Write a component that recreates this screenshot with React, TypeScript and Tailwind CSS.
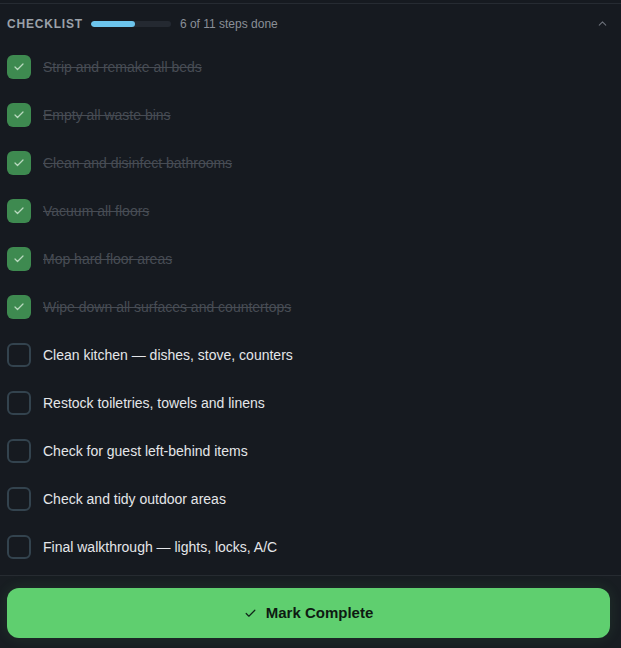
import React from "react";

type Step = { label: string; done: boolean };

const steps: Step[] = [
  { label: "Strip and remake all beds", done: true },
  { label: "Empty all waste bins", done: true },
  { label: "Clean and disinfect bathrooms", done: true },
  { label: "Vacuum all floors", done: true },
  { label: "Mop hard floor areas", done: true },
  { label: "Wipe down all surfaces and countertops", done: true },
  { label: "Clean kitchen — dishes, stove, counters", done: false },
  { label: "Restock toiletries, towels and linens", done: false },
  { label: "Check for guest left-behind items", done: false },
  { label: "Check and tidy outdoor areas", done: false },
  { label: "Final walkthrough — lights, locks, A/C", done: false },
];

function Check({ className, width = 2.5 }: { className?: string; width?: number }) {
  return (
    <svg viewBox="0 0 24 24" fill="none" stroke="currentColor" strokeWidth={width} strokeLinecap="round" strokeLinejoin="round" className={className}>
      <path d="M20 6 9 17l-5-5" />
    </svg>
  );
}

export default function App() {
  const doneCount = steps.filter((s) => s.done).length;
  const pct = (doneCount / steps.length) * 100;
  return (
    <div className="h-[648px] w-[621px] bg-[#161a20] flex flex-col overflow-hidden" style={{ fontFamily: '"Liberation Sans", Arial, sans-serif' }}>
      <div className="h-[3px] shrink-0" />
      <div className="border-t border-[#262b32] flex-1 flex flex-col">
        <div className="h-[39px] flex items-center px-[7px] shrink-0">
          <span className="text-[12px] font-bold tracking-[0.8px] text-[#9ba1a9]">CHECKLIST</span>
          <div className="ml-[8px] w-[80px] h-[6px] rounded-full bg-[#242931] overflow-hidden">
            <div className="h-full rounded-full bg-[#6cc4ec]" style={{ width: `${pct}%` }} />
          </div>
          <span className="ml-[9px] text-[12px] text-[#8a8f97]">6 of {steps.length} steps done</span>
          <svg viewBox="0 0 24 24" fill="none" stroke="#6b7079" strokeWidth={2} strokeLinecap="round" strokeLinejoin="round" className="ml-auto mr-[5px] w-[13px] h-[13px]">
            <path d="m18 15-6-6-6 6" />
          </svg>
        </div>
        <ul className="flex flex-col">
          {steps.map((s) => (
            <li key={s.label} className="h-[48px] flex items-center px-[7px] gap-[12px]">
              {s.done ? (
                <span className="w-[24px] h-[24px] rounded-[6px] bg-[#3e8a50] flex items-center justify-center shrink-0">
                  <Check className="w-[12px] h-[12px] text-[#b9d9bf]" />
                </span>
              ) : (
                <span className="w-[24px] h-[24px] rounded-[6px] border-2 border-[#33434e] shrink-0" />
              )}
              <span className={s.done ? "text-[14px] text-[#474c54] line-through" : "text-[14px] text-[#e4e6e9]"}>
                {s.label}
              </span>
            </li>
          ))}
        </ul>
        <div className="mt-[4px] border-t border-[#262b31] bg-[#181d22] flex-1 pl-[7px] pr-[11px] pt-[12px]">
          <button className="w-full h-[50px] rounded-[12px] bg-[#5fcf6f] flex items-center justify-center gap-[9px] shadow-[0_0_14px_rgba(95,207,111,0.12)]">
            <Check className="w-[13px] h-[13px] text-[#10261a]" width={2.2} />
            <span className="text-[15px] font-bold text-[#0e1a12]">Mark Complete</span>
          </button>
        </div>
      </div>
    </div>
  );
}
